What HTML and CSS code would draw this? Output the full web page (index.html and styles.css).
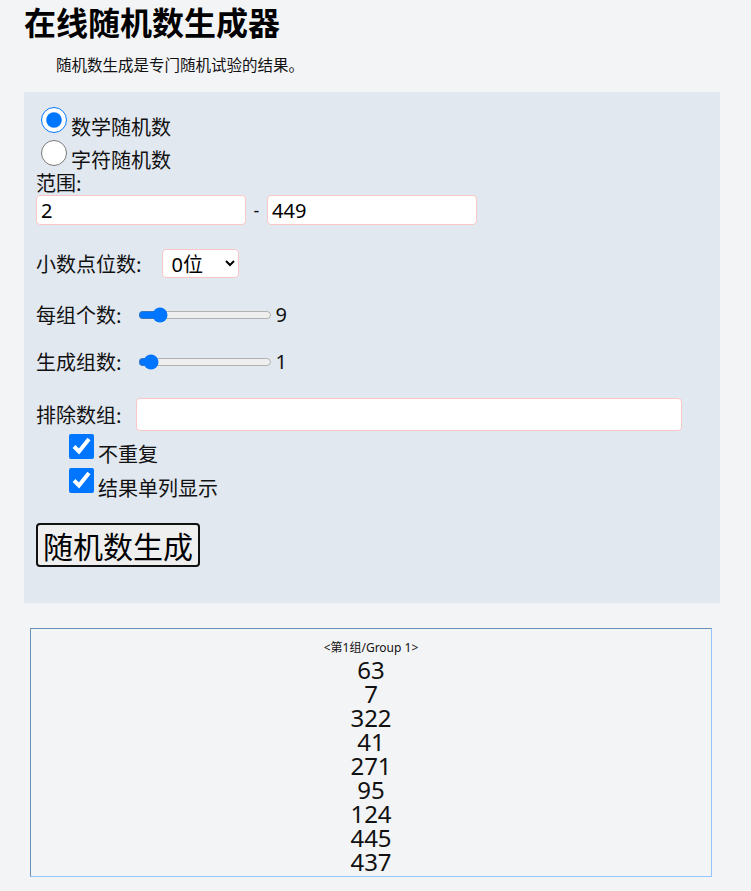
FILE: index.html
```html
<!DOCTYPE html>
<html lang="zh-CN">
<head>
<meta charset="utf-8">
<title>在线随机数生成器</title>
<link rel="stylesheet" href="styles.css">
</head>
<body>
<div class="page">
  <h1 class="title">在线随机数生成器</h1>
  <p class="intro">随机数生成是专门随机试验的结果。</p>

  <form class="panel">
    <label class="radio-row"><input type="radio" name="kind" checked><span>数学随机数</span></label>
    <label class="radio-row"><input type="radio" name="kind"><span>字符随机数</span></label>

    <div class="range-label">范围:</div>
    <div class="range-row">
      <input class="text-input range-input" type="text" value="2">
      <span class="dash">-</span>
      <input class="text-input range-input" type="text" value="449">
    </div>

    <div class="field-row decimals">
      <span class="field-label">小数点位数:</span>
      <select class="select"><option>0位</option><option>1位</option><option>2位</option></select>
    </div>

    <div class="field-row slider-row first">
      <span class="field-label">每组个数:</span>
      <input class="slider" type="range" min="1" max="68" value="9">
      <span class="slider-value">9</span>
    </div>

    <div class="field-row slider-row second">
      <span class="field-label">生成组数:</span>
      <input class="slider" type="range" min="0" max="20" value="1">
      <span class="slider-value">1</span>
    </div>

    <div class="field-row exclude-row">
      <span class="field-label">排除数组:</span>
      <input class="text-input exclude-input" type="text">
    </div>

    <label class="check-row first-check"><input type="checkbox" checked><span>不重复</span></label>
    <label class="check-row"><input type="checkbox" checked><span>结果单列显示</span></label>

    <button type="button" class="generate">随机数生成</button>
  </form>

  <div class="results">
    <div class="group-title">&lt;第1组/Group 1&gt;</div>
    <div class="num">63</div>
    <div class="num">7</div>
    <div class="num">322</div>
    <div class="num">41</div>
    <div class="num">271</div>
    <div class="num">95</div>
    <div class="num">124</div>
    <div class="num">445</div>
    <div class="num">437</div>
  </div>
</div>
</body>
</html>
```

FILE: styles.css
```css
html, body {
  margin: 0;
  padding: 0;
  background: #f3f4f6;
}

body {
  font-family: "Noto Sans", "Noto Sans CJK SC", sans-serif;
  color: #111;
}

.page {
  padding: 0 0 16px 24px;
}

.title {
  margin: 0;
  padding-top: 3px;
  font-size: 32px;
  line-height: 36px;
  font-weight: 700;
  font-family: "Noto Sans CJK SC", sans-serif;
  color: #000;
}

.intro {
  margin: 14px 0 0 32px;
  font-size: 15.5px;
  line-height: 22px;
  font-family: "Noto Sans CJK SC", sans-serif;
}

.panel {
  width: 672px;
  margin-top: 17px;
  padding: 12px 12px 36px 12px;
  background: #e2e8f0;
  font-family: "Noto Sans", "Noto Sans CJK SC", sans-serif;
  font-size: 20px;
}

.radio-row {
  display: flex;
  align-items: flex-end;
  height: 33px;
  line-height: 24px;
}

.radio-row input {
  width: 26px;
  height: 26px;
  margin: 3px 4px 4px 5px;
}

.radio-row span {
  font-family: "Noto Sans CJK SC", sans-serif;
  line-height: 24px;
  position: relative;
  top: 2px;
}

.range-label {
  font-family: "Noto Sans CJK SC", sans-serif;
  line-height: 24px;
  margin-top: 1px;
}

.range-row {
  display: flex;
  align-items: center;
}

.text-input {
  box-sizing: border-box;
  height: 30px;
  border: 1px solid #fbc6c6;
  border-radius: 4px;
  background: #fff;
  font-family: "Noto Sans", sans-serif;
  font-size: 20px;
  padding: 0 4px;
  color: #000;
  outline: none;
}

.range-input {
  width: 210px;
}

.dash {
  width: 21px;
  text-align: center;
  font-size: 18px;
}

.field-row {
  display: flex;
  align-items: center;
}

.field-label {
  font-family: "Noto Sans CJK SC", sans-serif;
  line-height: 24px;
}

.decimals {
  margin-top: 24px;
}

.select {
  margin-left: 20px;
  box-sizing: border-box;
  width: 77px;
  height: 29px;
  border: 1px solid #fbc6c6;
  border-radius: 4px;
  background: #fff;
  font-family: "Noto Sans", "Noto Sans CJK SC", sans-serif;
  font-size: 20px;
  padding: 0 0 0 5px;
  color: #000;
}

.slider-row.first {
  margin-top: 25px;
}

.slider-row.second {
  margin-top: 23px;
}

.slider {
  width: 134px;
  margin: 0 0 0 16px;
}

.slider-value {
  margin-left: 4px;
  line-height: 24px;
}

.exclude-row {
  margin-top: 24px;
}

.exclude-input {
  width: 546px;
  height: 33px;
  margin-left: 14px;
}

.check-row {
  display: flex;
  align-items: flex-end;
  height: 34px;
  padding-left: 29px;
}

.first-check {
  margin-top: 0;
}

.check-row input {
  width: 25px;
  height: 25px;
  margin: 3px 4px 6px 4px;
}

.check-row span {
  font-family: "Noto Sans CJK SC", sans-serif;
  line-height: 24px;
  position: relative;
  top: 1px;
}

.generate {
  display: block;
  margin-top: 24px;
  height: 44px;
  padding: 0 5px;
  border: 2px solid #111;
  border-radius: 4px;
  background: #efefef;
  font-family: "Noto Sans CJK SC", sans-serif;
  font-size: 30px;
  line-height: 38px;
  color: #000;
}

.results {
  width: 680px;
  margin: 25px 0 0 6px;
  padding: 8px 0 2px 0;
  border-style: solid;
  border-width: 1px;
  border-color: #6a8fb7 #93c5fd #93c5fd #6a8fb7;
  text-align: center;
  font-family: "Noto Sans", "Noto Sans CJK SC", sans-serif;
}

.group-title {
  font-size: 12px;
  line-height: 21px;
}

.num {
  font-size: 24px;
  line-height: 24px;
}
```
